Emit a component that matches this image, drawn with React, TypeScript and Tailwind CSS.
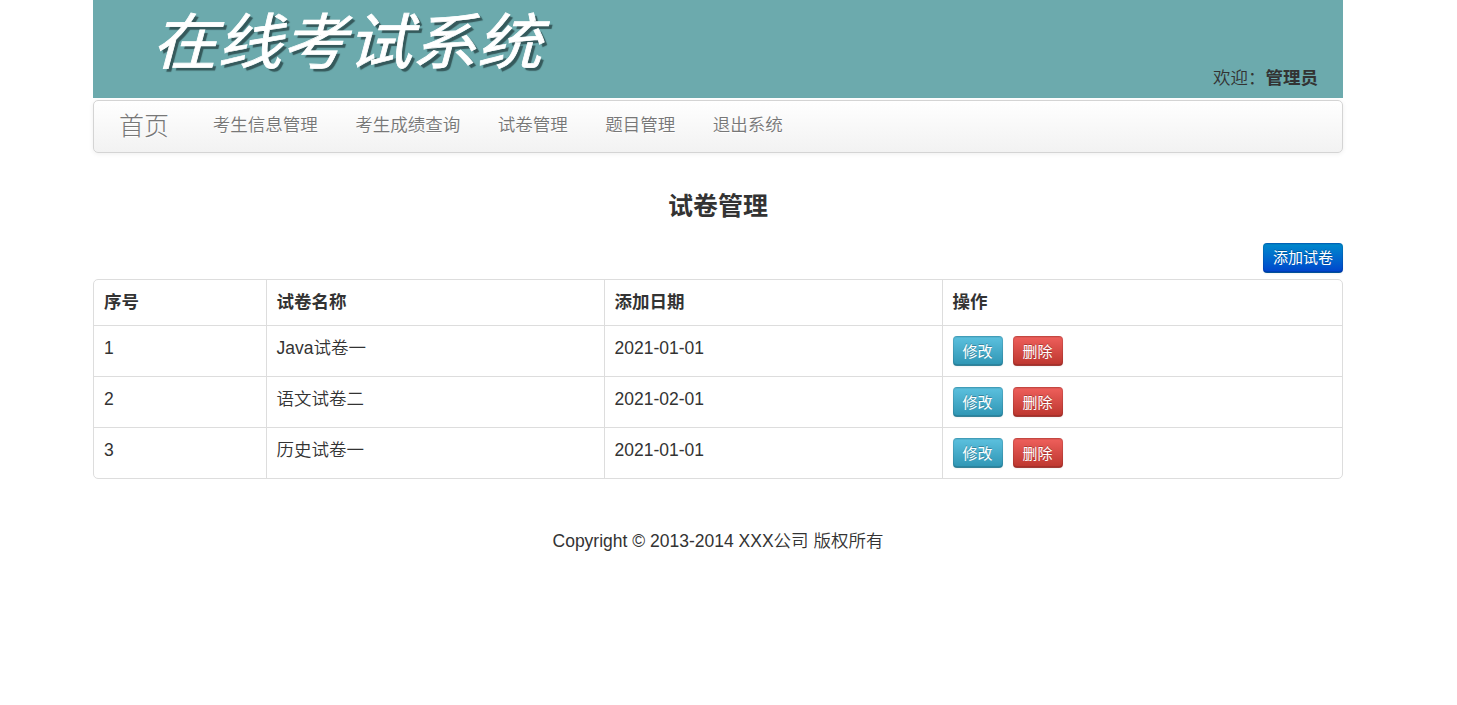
const menus = ["考生信息管理", "考生成绩查询", "试卷管理", "题目管理", "退出系统"];

const papers = [
  { id: 1, name: "Java试卷一", date: "2021-01-01" },
  { id: 2, name: "语文试卷二", date: "2021-02-01" },
  { id: 3, name: "历史试卷一", date: "2021-01-01" },
];

const btn =
  "h-[30px] rounded-[4px] border border-black/10 border-b-black/25 bg-repeat-x px-[9px] text-[15px] font-normal text-white [text-shadow:0_-1px_0_rgba(0,0,0,0.25)] shadow-[inset_0_1px_0_rgba(0,0,0,0.06),inset_0_-1px_0_rgba(0,0,0,0.12),0_1px_2px_rgba(0,0,0,0.05)]";

const PaperTable = () => (
  <div className="mt-[6px] overflow-hidden rounded-[5px] border border-[#dddddd]">
    <table className="w-full table-fixed border-collapse text-left">
      <colgroup>
        <col className="w-[172px]" />
        <col className="w-[338px]" />
        <col className="w-[338px]" />
        <col />
      </colgroup>
      <thead>
        <tr className="h-[45px] align-top">
          <th className="px-[10px] pt-[10px]">序号</th>
          <th className="border-l border-[#dddddd] px-[10px] pt-[10px]">试卷名称</th>
          <th className="border-l border-[#dddddd] px-[10px] pt-[10px]">添加日期</th>
          <th className="border-l border-[#dddddd] px-[10px] pt-[10px]">操作</th>
        </tr>
      </thead>
      <tbody>
        {papers.map((paper) => (
          <tr key={paper.id} className="h-[51px] border-t border-[#dddddd] align-top">
            <td className="px-[10px] pt-[10px]">{paper.id}</td>
            <td className="border-l border-[#dddddd] px-[10px] pt-[10px]">{paper.name}</td>
            <td className="border-l border-[#dddddd] px-[10px] pt-[10px]">{paper.date}</td>
            <td className="border-l border-[#dddddd] px-[10px] pt-[10px]">
              <div className="flex gap-[10px]">
                <button
                  className={`${btn} bg-[#49afcd] bg-linear-to-b from-[#5bc0de] to-[#2f96b4] leading-[29px]`}
                >
                  修改
                </button>
                <button
                  className={`${btn} bg-[#da4f49] bg-linear-to-b from-[#ee5f5b] to-[#bd362f] leading-[29px]`}
                >
                  删除
                </button>
              </div>
            </td>
          </tr>
        ))}
      </tbody>
    </table>
  </div>
);

const App = () => {
  return (
    <div className="min-h-[705px] bg-white font-['Liberation_Sans','Noto_Sans_CJK_SC',sans-serif] text-[17.5px] leading-[25px] font-[350] text-[#333333]">
      <div className="ml-[93px] w-[1250px]">
        {/* Banner */}
        <header className="flex h-[98px] justify-between bg-[#6caaad] pr-[25px] pl-[59px]">
          <h1 className="origin-left scale-x-[1.015] scale-y-[0.95] text-[64px] leading-[87px] font-normal whitespace-nowrap text-white italic [-webkit-text-stroke:0.8px_white] [text-shadow:3px_3px_1px_#35595b]">
            在线考试系统
          </h1>
          <p className="mt-[66px]">
            欢迎：<strong className="font-bold">管理员</strong>
          </p>
        </header>

        {/* Navbar */}
        <nav className="mt-[2px] flex h-[53px] rounded-[5px] border border-[#d4d4d4] bg-linear-to-b from-white to-[#f2f2f2] pl-[25px] text-[#777777] shadow-[0_1px_5px_rgba(0,0,0,0.065)] [text-shadow:0_1px_0_#ffffff]">
          <a href="#" className="mr-[25px] pt-[13px] text-[25px] font-light">
            首页
          </a>
          <ul className="flex">
            {menus.map((menu) => (
              <li key={menu} className="px-[18.75px] pt-[12px]">
                <a href="#">{menu}</a>
              </li>
            ))}
          </ul>
        </nav>

        <h2 className="mt-[28px] text-center text-[25px] leading-[50px] font-bold">试卷管理</h2>

        <div className="mt-[12px] flex justify-end">
          <button
            className={`${btn} bg-[#006dcc] bg-linear-to-b from-[#0088cc] to-[#0044cc] leading-[28px]`}
          >
            添加试卷
          </button>
        </div>

        <PaperTable />

        <footer className="mt-[50px] text-center">Copyright © 2013-2014 XXX公司 版权所有</footer>
      </div>
    </div>
  );
};

export default App;
